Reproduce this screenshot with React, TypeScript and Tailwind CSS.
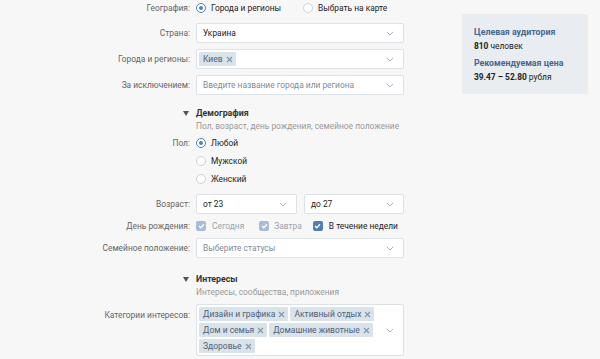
import React from "react";

const Chevron = () => (
  <svg width="8" height="5" viewBox="0 0 8 5" className="shrink-0">
    <path d="M0.8 0.8 L4 4 L7.2 0.8" fill="none" stroke="#aab4be" strokeWidth="1" />
  </svg>
);

const XIcon = () => (
  <svg width="7" height="7" viewBox="0 0 7 7" className="shrink-0 ml-[3px]">
    <path d="M1 1 L6 6 M6 1 L1 6" fill="none" stroke="#7d95ae" strokeWidth="1.1" />
  </svg>
);

const Radio = ({ checked }: { checked?: boolean }) => (
  <span
    className={
      checked
        ? "w-[10px] h-[10px] rounded-full border border-[#5181b8] bg-white flex items-center justify-center shrink-0"
        : "w-[10px] h-[10px] rounded-full border border-[#c9d1da] bg-white shrink-0"
    }
  >
    {checked && <span className="w-[4px] h-[4px] rounded-full bg-[#5181b8]" />}
  </span>
);

const Check = ({ dim }: { dim?: boolean }) => (
  <span
    className={
      dim
        ? "w-[10px] h-[10px] rounded-[2px] bg-[#a6bdd9] flex items-center justify-center shrink-0"
        : "w-[10px] h-[10px] rounded-[2px] bg-[#4f7eb5] flex items-center justify-center shrink-0"
    }
  >
    <svg width="7" height="6" viewBox="0 0 7 6">
      <path d="M1 3 L2.8 4.7 L6 1.2" fill="none" stroke="#fff" strokeWidth="1.3" />
    </svg>
  </span>
);

const Tag = ({ text }: { text: string }) => (
  <span className="h-[14px] pl-[4px] pr-[3px] bg-[#dae2ea] text-[#4f6178] flex items-center rounded-[1px] whitespace-nowrap text-[8.5px]">
    {text}
    <XIcon />
  </span>
);

const Label = ({ children }: { children?: React.ReactNode }) => (
  <div className="w-[190px] text-right text-[#656565] shrink-0 whitespace-nowrap">{children}</div>
);

const Select = ({
  children,
  w = "w-[208px]",
  placeholder,
}: {
  children?: React.ReactNode;
  w?: string;
  placeholder?: boolean;
}) => (
  <div
    className={`${w} h-[20px] bg-white border border-[#dde2e7] rounded-[2px] flex items-center pl-[6px] pr-[9px] ${
      placeholder ? "text-[#818c97]" : "text-[#222]"
    }`}
  >
    <div className="flex-1 flex items-center whitespace-nowrap">{children}</div>
    <Chevron />
  </div>
);

const Triangle = () => (
  <svg width="6" height="5" viewBox="0 0 6 5" className="inline-block">
    <path d="M0 0 H6 L3 5 Z" fill="#555" />
  </svg>
);

export default function App() {
  return (
    <div className="w-[600px] h-[359px] bg-[#f7f7f7] flex overflow-hidden font-['Roboto',sans-serif] text-[8.4px] leading-none text-[#222]">
      <div className="w-[404px] flex flex-col shrink-0">
        {/* Geography */}
        <div className="h-[16px] flex items-center gap-[6px] whitespace-nowrap">
          <Label>География:</Label>
          <div className="flex items-center gap-[5px]">
            <Radio checked />
            <span>Города и регионы</span>
          </div>
          <div className="flex items-center gap-[5px] ml-[16px]">
            <Radio />
            <span>Выбрать на карте</span>
          </div>
        </div>

        <div className="mt-[7px] flex items-center gap-[6px]">
          <Label>Страна:</Label>
          <Select>Украина</Select>
        </div>

        <div className="mt-[6px] flex items-center gap-[6px]">
          <Label>Города и регионы:</Label>
          <div className="w-[208px] h-[20px] bg-white border border-[#dde2e7] rounded-[2px] flex items-center pl-[2px] pr-[9px]">
            <div className="flex-1 flex">
              <Tag text="Киев" />
            </div>
            <Chevron />
          </div>
        </div>

        <div className="mt-[6px] flex items-center gap-[6px]">
          <Label>За исключением:</Label>
          <Select placeholder>Введите название города или региона</Select>
        </div>

        {/* Demography */}
        <div className="mt-[11px] h-[14px] flex items-center gap-[6px]">
          <Label>
            <span className="pr-[1px]">
              <Triangle />
            </span>
          </Label>
          <span className="font-bold text-[#333] text-[8.8px]">Демография</span>
        </div>
        <div className="h-[13px] flex items-center gap-[6px] whitespace-nowrap">
          <Label />
          <span className="text-[#999]">Пол, возраст, день рождения, семейное положение</span>
        </div>

        <div className="mt-[1px] h-[18px] flex items-center gap-[6px]">
          <Label>Пол:</Label>
          <div className="flex items-center gap-[5px]">
            <Radio checked />
            <span>Любой</span>
          </div>
        </div>
        <div className="h-[18px] flex items-center gap-[6px]">
          <Label />
          <div className="flex items-center gap-[5px]">
            <Radio />
            <span>Мужской</span>
          </div>
        </div>
        <div className="h-[18px] flex items-center gap-[6px]">
          <Label />
          <div className="flex items-center gap-[5px]">
            <Radio />
            <span>Женский</span>
          </div>
        </div>

        <div className="mt-[6px] flex items-center gap-[6px]">
          <Label>Возраст:</Label>
          <div className="flex gap-[7px]">
            <Select w="w-[101px]">от 23</Select>
            <Select w="w-[100px]">до 27</Select>
          </div>
        </div>

        <div className="mt-[5px] h-[14px] flex items-center gap-[6px] whitespace-nowrap">
          <Label>День рождения:</Label>
          <div className="flex items-center">
            <Check dim />
            <span className="ml-[6px] text-[#9aa3ad]">Сегодня</span>
            <span className="ml-[15px]">
              <Check dim />
            </span>
            <span className="ml-[5px] text-[#9aa3ad]">Завтра</span>
            <span className="ml-[11px]">
              <Check />
            </span>
            <span className="ml-[6px]">В течение недели</span>
          </div>
        </div>

        <div className="mt-[5px] flex items-center gap-[6px]">
          <Label>Семейное положение:</Label>
          <Select placeholder>Выберите статусы</Select>
        </div>

        {/* Interests */}
        <div className="mt-[14px] h-[14px] flex items-center gap-[6px]">
          <Label>
            <span className="pr-[1px]">
              <Triangle />
            </span>
          </Label>
          <span className="font-bold text-[#333] text-[8.8px]">Интересы</span>
        </div>
        <div className="h-[13px] flex items-center gap-[6px] whitespace-nowrap">
          <Label />
          <span className="text-[#999]">Интересы, сообщества, приложения</span>
        </div>

        <div className="mt-[5px] flex items-start gap-[6px]">
          <div className="pt-[7px]">
            <Label>Категории интересов:</Label>
          </div>
          <div className="w-[208px] h-[52px] bg-white border border-[#dde2e7] rounded-[2px] flex items-center pl-[2px] pr-[9px]">
            <div className="flex-1 flex flex-col gap-[2px]">
              <div className="flex gap-[2px]">
                <Tag text="Дизайн и графика" />
                <Tag text="Активный отдых" />
              </div>
              <div className="flex gap-[2px]">
                <Tag text="Дом и семья" />
                <Tag text="Домашние животные" />
              </div>
              <div className="flex gap-[2px]">
                <Tag text="Здоровье" />
              </div>
            </div>
            <Chevron />
          </div>
        </div>
      </div>

      {/* Right panel */}
      <div className="ml-[58px] mt-[14px] w-[126px] h-[80px] bg-[#e9edf1] rounded-[1px] pl-[12px] pt-[14px] flex flex-col shrink-0 whitespace-nowrap">
        <span className="font-bold text-[#45678f] text-[8.8px]">Целевая аудитория</span>
        <span className="mt-[5px]">
          <b>810</b> человек
        </span>
        <span className="mt-[9px] font-bold text-[#45678f] text-[8.8px]">Рекомендуемая цена</span>
        <span className="mt-[5px]">
          <b>39.47 – 52.80</b> рубля
        </span>
      </div>
    </div>
  );
}
